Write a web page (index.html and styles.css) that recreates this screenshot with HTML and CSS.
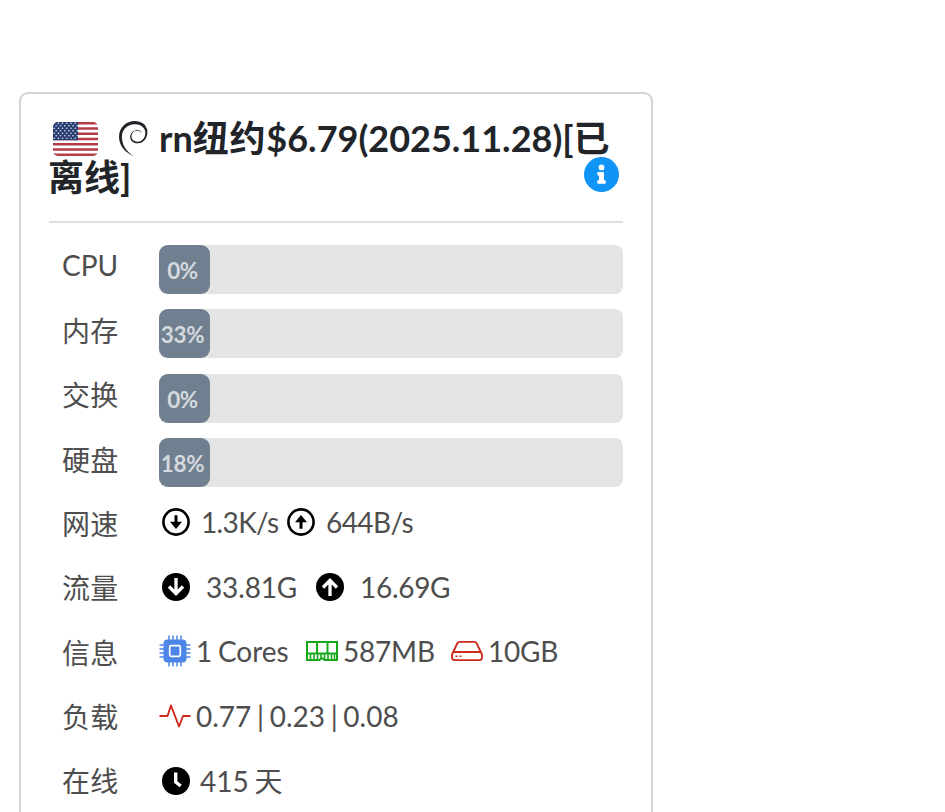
FILE: index.html
```html
<!DOCTYPE html>
<html lang="zh-CN">
<head>
<meta charset="utf-8">
<title>Server status</title>
<link rel="stylesheet" href="styles.css">
</head>
<body>
<main class="card">
  <header class="header">
    <h1 class="title"><svg class="flag" viewBox="0 0 45 34">
      <defs>
        <clipPath id="round"><rect width="45" height="34" rx="5"/></clipPath>
        <pattern id="stars" width="4.2" height="5" patternUnits="userSpaceOnUse"><circle cx="1.2" cy="1.3" r=".75" fill="#fff"/><circle cx="3.3" cy="3.8" r=".75" fill="#fff"/></pattern>
      </defs>
      <g clip-path="url(#round)">
        <rect width="45" height="34" fill="#fff"/>
        <path d="M0 1.3h45M0 6.54h45M0 11.77h45M0 17h45M0 22.23h45M0 27.46h45M0 32.7h45" stroke="#b23c48" stroke-width="2.62"/>
        <rect width="25" height="18.3" fill="#263b72"/>
        <rect width="25" height="18.3" fill="url(#stars)"/>
      </g>
    </svg><svg class="debian" viewBox="0 0 29 36">
      <path d="M15.500 35.500C6 32 0 24.500 0 15.800C0 6.500 7 0 15.800 0c3.200 0 6.200 1 8.300 2.500c1.800 .9 2.300 2.300 2.700 3.500c1.300 1.500 1.800 3.500 1.600 5.400c-.1 5.800-3.800 10.600-9.500 10.900c-4.500 .1-7.700-2.600-7.700-6.400c0-3.700 2.900-6.700 6.600-7c-3.200 1-5.400 3.600-5.300 6.700c.1 3.200 2.900 5.300 6.200 5.100c4.900-.3 7.700-4.400 7.600-9.300c0-1.700-.8-3.700-1.900-4.700C22.500 4.300 19.500 3.200 15.500 3.200C8.800 3.200 2.900 8.500 2.900 15.500c0 8 4.200 15.500 12.600 20z" fill="#212529"/>
      <path d="M16.500 9.500c2.500-.5 4.600 .2 5.800 2" fill="none" stroke="#212529" stroke-width=".8"/>
    </svg>rn<span class="han">纽约</span>$6.79(2025.11.28)[已<br>离线]</h1>
    <svg class="info" viewBox="0 0 512 512"><path fill="#1094f5" d="M256 0a256 256 0 1 0 0 512a256 256 0 1 0 0-512zm0 110a42 42 0 1 1 0 84a42 42 0 1 1 0-84zm62 270c0 7-5 12-12 12h-100c-7 0-12-5-12-12v-28c0-7 5-12 12-12h14v-68h-14c-7 0-12-5-12-12v-28c0-7 5-12 12-12h74c7 0 12 5 12 12v108h14c7 0 12 5 12 12z"/></svg>
  </header>
  <section class="rows">
    <div class="label latin">CPU</div>
    <div class="bar"><div class="fill"><span>0%</span></div></div>
    <div class="label">内存</div>
    <div class="bar"><div class="fill"><span>33%</span></div></div>
    <div class="label">交换</div>
    <div class="bar"><div class="fill"><span>0%</span></div></div>
    <div class="label">硬盘</div>
    <div class="bar"><div class="fill"><span>18%</span></div></div>
    <div class="label">网速</div>
    <div class="value">
      <svg class="round" viewBox="0 0 28 28"><circle cx="14" cy="14" r="12.600" fill="none" stroke="#000" stroke-width="2.600"/><path d="M12.500 7.200h3v6.600h4.500L14 21l-6-7.200h4.500z"/></svg>
      <span class="down-rate">1.3K/s</span>
      <svg class="round rate-up" viewBox="0 0 28 28"><circle cx="14" cy="14" r="12.600" fill="none" stroke="#000" stroke-width="2.600"/><path d="M12.500 20.800h3v-6.600h4.500L14 7l-6 7.200h4.500z"/></svg>
      <span class="up-rate">644B/s</span>
    </div>
    <div class="label">流量</div>
    <div class="value">
      <svg class="round" viewBox="0 0 28 28"><circle cx="14" cy="14" r="14"/><path d="M14 5v16M7 13.500l7 7.200l7-7.200" fill="none" stroke="#fff" stroke-width="3.300"/></svg>
      <span class="down-total">33.81G</span>
      <svg class="round total-up" viewBox="0 0 28 28"><circle cx="14" cy="14" r="14"/><path d="M14 23v-16M7 14.500l7-7.200l7 7.200" fill="none" stroke="#fff" stroke-width="3.300"/></svg>
      <span class="up-total">16.69G</span>
    </div>
    <div class="label">信息</div>
    <div class="value">
      <svg class="chip" viewBox="0 0 32 32"><rect x="4.500" y="4.500" width="23" height="23" rx="4" fill="#4d86e6"/><path d="M10 .5v31M14 .5v31M18 .5v31M22 .5v31M.5 10h31M.5 14h31M.5 18h31M.5 22h31" stroke="#4d86e6" stroke-width="1.500"/><rect x="7" y="7" width="18" height="18" fill="#4d86e6"/><rect x="10.700" y="10.700" width="10.600" height="10.600" rx="1.500" fill="none" stroke="#fff" stroke-width="1.700"/></svg>
      <span class="cores">1 Cores</span>
      <svg class="memory" viewBox="0 0 32 20"><path d="M1 1h30v18H18.500l-1.500-1.500h-2L13.500 19H1zM1 12.500h30M11 1v11.500M21.500 1v11.500" fill="none" stroke="#17a81a" stroke-width="2"/><path d="M4.500 13v5M8 13v5M11.500 13v5M15 13v4M18.500 13v5M22 13v5M25.500 13v5M28.500 13v5" stroke="#17a81a" stroke-width="1.600"/></svg>
      <span class="ram">587MB</span>
      <svg class="disk" viewBox="0 0 32 20"><path d="M1 13.500L6.200 2.500Q7 .9 8.800 .9h14.400q1.800 0 2.600 1.600L31 13.500v3q0 2.600-2.600 2.600H3.600Q1 19.100 1 16.500zM1.500 12Q2.500 11 4 11h24q1.500 0 2.500 1" fill="none" stroke="#cf281d" stroke-width="1.800"/><path d="M4.500 15.200h2M8.500 15.200h2" stroke="#cf281d" stroke-width="1.600"/></svg>
      <span class="storage">10GB</span>
    </div>
    <div class="label">负载</div>
    <div class="value">
      <svg class="pulse" viewBox="0 0 32 24"><path d="M.5 12h8L12 1.500L20 22.500L24 12h7.500" fill="none" stroke="#cf281d" stroke-width="1.900" stroke-linejoin="round"/></svg>
      <span class="load">0.77 | 0.23 | 0.08</span>
    </div>
    <div class="label">在线</div>
    <div class="value">
      <svg class="round" viewBox="0 0 28 28"><circle cx="14" cy="14" r="14"/><path d="M13.700 5.500v9.500l5 4" fill="none" stroke="#fff" stroke-width="3.400"/></svg>
      <span class="uptime">415 天</span>
    </div>
  </section>
</main>
</body>
</html>
```
FILE: styles.css
```css
* { box-sizing: border-box; }
html { overflow: hidden; }
body {
  margin: 0;
  padding: 92px 0 0 19px;
  height: 812px;
  overflow: hidden;
  background: #fff;
  color: #4e4e4e;
  font: 28px/40px Lato, "Noto Sans CJK SC", sans-serif;
}
svg { display: block; flex: none; }
.card {
  width: 634px;
  height: 720px;
  padding: 25px 28px 0;
  border: 2px solid #d2d3d3;
  border-bottom: 0;
  border-radius: 9px 9px 0 0;
  overflow: hidden;
}
.header {
  position: relative;
  height: 104px;
  border-bottom: 2px solid #dededf;
}
.title {
  margin: 0 0 0 -1px;
  color: #212529;
  font-size: 36px;
  font-weight: 700;
  line-height: 38.5px;
  white-space: nowrap;
}
.title svg { display: inline-block; }
.han { letter-spacing: .8px; }
.flag { width: 45px; height: 34px; margin: 0 21px 0 5px; vertical-align: -4px; }
.debian { width: 29px; height: 36px; margin-right: 11px; vertical-align: -5px; }
.info { position: absolute; right: 4px; top: 38px; width: 35px; height: 35px; }
.rows {
  display: grid;
  grid-template-columns: 97px 464px;
  grid-template-rows: repeat(8, 64.45px) 59px;
  align-items: center;
  margin: 14px 0 0 13px;
}
.label { padding-bottom: 6px; letter-spacing: .2px; }
.latin { padding-bottom: 8px; letter-spacing: 0; }
.label:nth-last-child(2) { padding-bottom: 2px; }
.bar { height: 49px; border-radius: 8px; background: #e4e4e4; }
.fill {
  display: flex;
  align-items: center;
  width: 51px;
  height: 49px;
  padding-top: 3px;
  border-radius: 9px;
  background: #708090;
  color: #d5d9de;
  font-size: 22.4px;
  font-weight: 700;
}
.fill span { width: 47px; text-align: center; letter-spacing: -.3px; }
.value { display: flex; align-items: center; padding-bottom: 9px; white-space: nowrap; }
.value:last-child { padding-bottom: 3px; }
.round { width: 28px; height: 28px; margin-left: 3px; }
.down-rate { margin-left: 11px; width: 78px; letter-spacing: -.65px; }
.rate-up { margin-left: 8px; }
.up-rate { margin-left: 11px; letter-spacing: -.6px; }
.down-total { margin-left: 16px; width: 92px; letter-spacing: -.15px; }
.total-up { margin-left: 18px; }
.up-total { margin-left: 16px; letter-spacing: -.3px; }
.chip { width: 32px; height: 32px; }
.cores { margin-left: 5px; width: 94px; word-spacing: -1.5px; }
.memory { width: 32px; height: 20px; margin-left: 16px; }
.ram { margin-left: 5px; width: 92px; letter-spacing: -.2px; }
.disk { width: 32px; height: 20px; margin-left: 16px; }
.storage { margin-left: 5px; letter-spacing: -.2px; }
.pulse { width: 32px; height: 24px; }
.load { margin-left: 5px; word-spacing: -1.5px; }
.uptime { margin-left: 10px; word-spacing: -1.5px; }
```
